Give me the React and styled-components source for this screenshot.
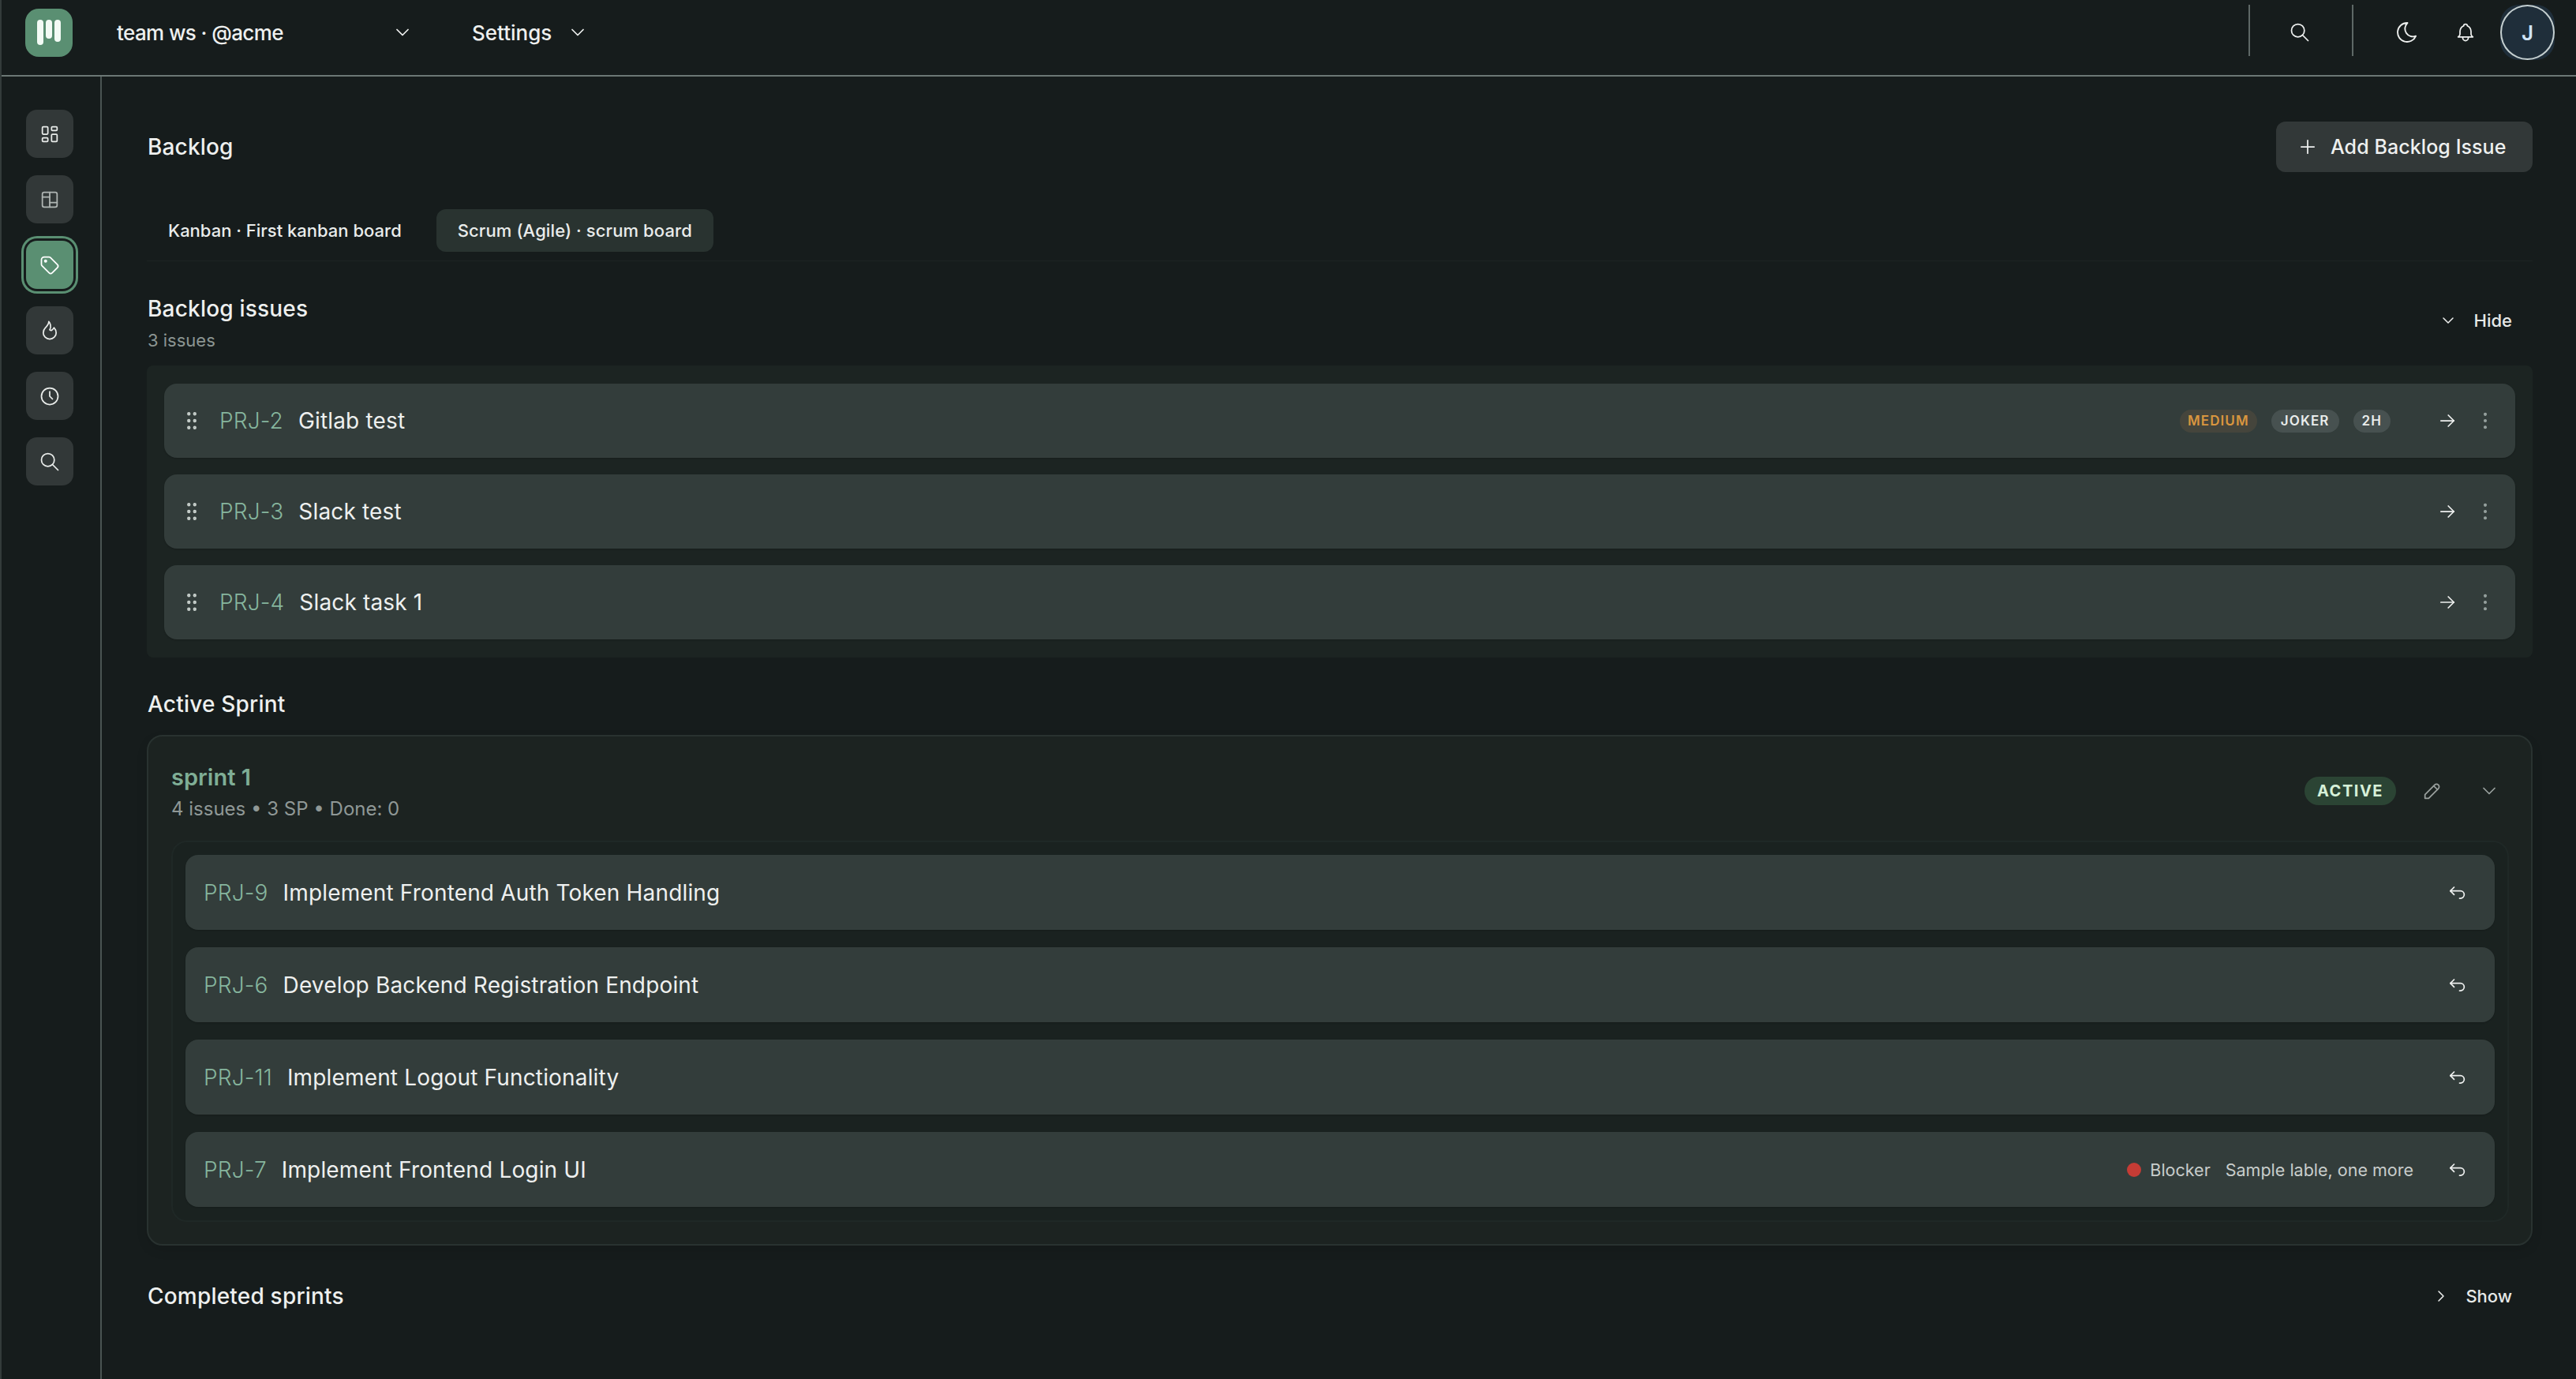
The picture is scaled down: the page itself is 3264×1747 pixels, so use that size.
import React from "react";
import styled, { createGlobalStyle } from "styled-components";
import {
  TbLayoutDashboard, TbLayoutBoard, TbTag, TbFlame, TbClock, TbSearch, TbMoon, TbBell,
  TbChevronDown, TbChevronRight, TbArrowRight, TbDotsVertical, TbGripVertical, TbPencil,
  TbArrowBackUp, TbPlus,
} from "react-icons/tb";

const Global = createGlobalStyle`
  * { box-sizing: border-box; }
  html, body { margin: 0; padding: 0; background: #161c1c; }
  body { font-family: Inter, "Noto Sans", sans-serif; color: #e9eceb; -webkit-font-smoothing: antialiased; }
`;

const Page = styled.div`
  width: 3264px; height: 1747px; overflow: hidden;
  display: flex; flex-direction: column;
  background: #161c1c;
  border-left: 2px solid #333b3a;
`;

const Header = styled.header`
  height: 97px; flex: none;
  display: flex; align-items: center;
  padding: 0 27px 13px 30px;
  border-bottom: 2px solid #6c7775;
`;

const LogoBox = styled.div`
  width: 60px; height: 61px; border-radius: 17px; background: #5a8f72; flex: none;
  margin-right: 56px;
  display: flex; align-items: center; justify-content: center;
`;

const Workspace = styled.div`
  width: 376px; display: flex; align-items: center; justify-content: space-between;
  font-size: 26px; font-weight: 500; color: #eef0ef; letter-spacing: -0.6px;
`;

const Settings = styled.div`
  margin-left: 74px; display: flex; align-items: center; gap: 19px;
  font-size: 26px; font-weight: 500; color: #eef0ef;
`;

const IconSlot = styled.span`
  width: 28px; height: 28px; flex: none;
  display: inline-flex; align-items: center; justify-content: center;
  color: ${(p) => p.$color || "#eef0ef"};
  svg { display: block; flex: none; }
`;

const HeaderRight = styled.div`
  margin-left: auto; display: flex; align-items: center;
`;

const Sep = styled.div`
  width: 2px; height: 65px; background: #5e6866; flex: none;
  margin-left: ${(p) => p.$ml || 0}px;
  margin-top: -5px;
`;

const HeaderIcon = styled(IconSlot)`
  margin-left: ${(p) => p.$ml}px;
`;

const Avatar = styled.div`
  position: relative; width: 69px; height: 70px; margin-left: 30px; flex: none;
  border-radius: 24px; background: #1f2e3a; color: #cfe3f5;
  display: flex; align-items: center; justify-content: center;
  font-size: 26px; font-weight: 600;
  &::after {
    content: ""; position: absolute; inset: 0;
    border-radius: 50%; border: 2px solid #c4cfd0;
  }
`;

const Body = styled.div`
  flex: 1; display: flex; min-height: 0;
`;

const Sidebar = styled.nav`
  width: 127px; flex: none;
  border-right: 2px solid #4a5452;
  padding: 42px 0 0 31px;
  display: flex; flex-direction: column; gap: 22px;
`;

const SideButton = styled.div`
  width: 60px; height: 61px; border-radius: 14px;
  background: ${(p) => (p.$active ? "#5a8f72" : "#323838")};
  display: flex; align-items: center; justify-content: center;
  color: ${(p) => (p.$active ? "#ffffff" : p.$dim ? "#b0b6b4" : "#e9ecea")};
  box-shadow: ${(p) => (p.$active ? "0 0 0 3px #161c1c, 0 0 0 6px #5a8f72" : "none")};
`;

const Main = styled.main`
  flex: 1; min-width: 0; padding: 57px 55px 0 57px;
`;

const TitleRow = styled.div`
  height: 64px; display: flex; align-items: center; justify-content: space-between;
`;

const PageTitle = styled.h1`
  margin: 0; font-size: 28px; line-height: 40px; font-weight: 500; color: #eef0ef;
  letter-spacing: 0.15px; padding-left: 1px;
`;

const AddButton = styled.button`
  height: 64px; width: 325px; padding: 0 0 0 26px; border: 0; border-radius: 12px;
  background: #323838; color: #eef0ef;
  display: flex; align-items: center; gap: 15px;
  font-family: inherit; font-size: 25px; font-weight: 500; letter-spacing: 0.08px;
`;

const Tabs = styled.div`
  margin-top: 47px; padding-bottom: 11px;
  display: flex; gap: 17px;
  border-bottom: 1px solid #1d2423;
`;

const Tab = styled.div`
  height: 54px; padding: 0 27px; border-radius: 12px;
  display: flex; align-items: center;
  font-size: 22px; font-weight: 500; color: #e9eceb;
  letter-spacing: ${(p) => (p.$active ? "0.1px" : "0")};
  background: ${(p) => (p.$active ? "#293330" : "transparent")};
`;

const SectionHead = styled.div`
  margin-top: 40px; display: flex; align-items: center; justify-content: space-between;
  margin-bottom: 16px;
`;

const SectionTitle = styled.h2`
  margin: 0; font-size: 28px; line-height: 40px; font-weight: 500; color: #eef0ef;
  letter-spacing: 0.2px; padding-left: 1px;
`;

const SectionMeta = styled.div`
  margin-top: 4px; padding-left: 1px; font-size: 22px; line-height: 32px; color: #8b9592;
`;

const Toggle = styled.div`
  display: flex; align-items: center; gap: ${(p) => p.$gap}px;
  margin-right: 26px; margin-bottom: ${(p) => p.$mb || 0}px;
  font-size: 22px; font-weight: 500; color: #e6e9e8;
`;

const BacklogPanel = styled.section`
  height: 370px; padding: 23px 22px;
  background: #1c2422; border-radius: 8px;
  display: flex; flex-direction: column; gap: 21px;
`;

const Row = styled.div`
  height: ${(p) => (p.$tall ? 95 : 94)}px;
  flex: none; border-radius: 16px; background: #333d3b;
  display: flex; align-items: center;
  padding: ${(p) => (p.$tall ? "0 34px 0 23px" : "0 24px 0 21px")};
  box-shadow: 0 1px 2px rgba(0, 0, 0, 0.18);
`;

const Key = styled.span`
  margin-left: ${(p) => p.$ml || 0}px;
  font-size: 28px; font-weight: 350; color: #86b69e; white-space: nowrap; letter-spacing: 0.16px;
`;

const IssueTitle = styled.span`
  margin-left: 19px; font-size: 28px; font-weight: 400; color: #eef0ef; white-space: nowrap;
  letter-spacing: 0.16px;
`;

const RowEnd = styled.div`
  margin-left: auto; display: flex; align-items: center;
`;

const Badge = styled.span`
  height: 29px; padding: 0 ${(p) => p.$px || 12}px; margin-right: 18px; border-radius: 15px;
  display: flex; align-items: center;
  font-size: 17px; font-weight: 600; letter-spacing: 1.1px;
  color: ${(p) => p.$color || "#e9eceb"};
  background: ${(p) => p.$bg || "#475150"};
`;

const ArrowSlot = styled(IconSlot)`
  margin-left: 40px;
`;

const MenuSlot = styled(IconSlot)`
  margin-left: 20px;
`;

const SprintTitle = styled(SectionTitle)`
  margin-top: 39px; margin-bottom: 19px;
`;

const SprintCard = styled.section`
  height: 647px; padding: 0 28px 0 29px;
  background: #1c2321;
  border: 2px solid #293230; border-radius: 20px;
  box-shadow: 0 6px 14px rgba(0, 0, 0, 0.1);
`;

const SprintHead = styled.div`
  height: 132px; padding-top: 32px; display: flex; justify-content: space-between;
`;

const SprintName = styled.div`
  font-size: 29px; line-height: 40px; font-weight: 600; color: #7fae96;
`;

const SprintMeta = styled.div`
  font-size: 24px; line-height: 40px; font-weight: 400; color: #8f9896;
`;

const SprintControls = styled.div`
  height: 36px; margin-top: 19px; margin-right: 11px;
  display: flex; align-items: center; gap: 44px;
`;

const ActiveBadge = styled.span`
  width: 116px; height: 36px; border-radius: 18px; margin-right: -12px;
  display: flex; align-items: center; justify-content: center;
  background: #2b4434; color: #d6f0d8;
  font-size: 20px; font-weight: 700; letter-spacing: 1.5px;
`;

const SprintList = styled.div`
  height: 483px; padding: 16px 16px;
  background: #1a2220;
  border: 2px solid #1f2826; border-radius: 20px;
  display: flex; flex-direction: column; gap: 22px;
`;

const Dot = styled.span`
  width: 18px; height: 18px; border-radius: 50%; background: #c53c35; flex: none; margin-right: 11px;
`;

const LabelText = styled.span`
  font-size: 21.5px; color: #c8cdcb; margin-right: ${(p) => p.$mr}px; white-space: nowrap;
`;

const CompletedRow = styled.div`
  margin-top: 44px; display: flex; align-items: center; justify-content: space-between;
`;

const Logo = () => (
  <svg width="60" height="61" viewBox="0 0 60 61">
    <rect x="15" y="14" width="8" height="32" rx="4" fill="#f3fbf5" />
    <rect x="26" y="14" width="8" height="24" rx="4" fill="#f3fbf5" />
    <rect x="37" y="14" width="8" height="28" rx="4" fill="#f3fbf5" />
  </svg>
);

const icon = (I, size = 28, sw = 1.5) => <I size={size} strokeWidth={sw} />;

const backlog = [
  { key: "PRJ-2", title: "Gitlab test", badges: true },
  { key: "PRJ-3", title: "Slack test" },
  { key: "PRJ-4", title: "Slack task 1" },
];

const sprint = [
  { key: "PRJ-9", title: "Implement Frontend Auth Token Handling" },
  { key: "PRJ-6", title: "Develop Backend Registration Endpoint" },
  { key: "PRJ-11", title: "Implement Logout Functionality" },
  { key: "PRJ-7", title: "Implement Frontend Login UI", labels: true },
];

const sideIcons = [TbLayoutDashboard, TbLayoutBoard, TbTag, TbFlame, TbClock, TbSearch];

export default function App() {
  return (
    <Page>
      <Global />
      <Header>
        <LogoBox><Logo /></LogoBox>
        <Workspace>
          <span>team ws · @acme</span>
          <IconSlot>{icon(TbChevronDown)}</IconSlot>
        </Workspace>
        <Settings>
          <span>Settings</span>
          <IconSlot>{icon(TbChevronDown)}</IconSlot>
        </Settings>
        <HeaderRight>
          <Sep />
          <HeaderIcon $ml={49}>{icon(TbSearch)}</HeaderIcon>
          <Sep $ml={52} />
          <HeaderIcon $ml={54}>{icon(TbMoon, 32, 1.4)}</HeaderIcon>
          <HeaderIcon $ml={46}>{icon(TbBell)}</HeaderIcon>
          <Avatar>J</Avatar>
        </HeaderRight>
      </Header>
      <Body>
        <Sidebar>
          {sideIcons.map((I, i) => (
            <SideButton key={i} $active={i === 2} $dim={i === 1}>{icon(I)}</SideButton>
          ))}
        </Sidebar>
        <Main>
          <TitleRow>
            <PageTitle>Backlog</PageTitle>
            <AddButton>
              <IconSlot>{icon(TbPlus)}</IconSlot>
              Add Backlog Issue
            </AddButton>
          </TitleRow>
          <Tabs>
            <Tab>Kanban · First kanban board</Tab>
            <Tab $active>Scrum (Agile) · scrum board</Tab>
          </Tabs>
          <SectionHead>
            <div>
              <SectionTitle>Backlog issues</SectionTitle>
              <SectionMeta>3 issues</SectionMeta>
            </div>
            <Toggle $gap={19} $mb={6}>
              <IconSlot>{icon(TbChevronDown, 24)}</IconSlot>
              Hide
            </Toggle>
          </SectionHead>
          <BacklogPanel>
            {backlog.map((r) => (
              <Row key={r.key}>
                <IconSlot $color="#c8d0cc">{icon(TbGripVertical, 30)}</IconSlot>
                <Key $ml={21}>{r.key}</Key>
                <IssueTitle>{r.title}</IssueTitle>
                <RowEnd>
                  {r.badges && (
                    <>
                      <Badge $color="#d9963f" $bg="#45453c" $px={10}>MEDIUM</Badge>
                      <Badge>JOKER</Badge>
                      <Badge $px={11}>2H</Badge>
                    </>
                  )}
                  <ArrowSlot>{icon(TbArrowRight)}</ArrowSlot>
                  <MenuSlot $color="#9aa5a2">{icon(TbDotsVertical)}</MenuSlot>
                </RowEnd>
              </Row>
            ))}
          </BacklogPanel>
          <SprintTitle>Active Sprint</SprintTitle>
          <SprintCard>
            <SprintHead>
              <div>
                <SprintName>sprint 1</SprintName>
                <SprintMeta>4 issues • 3 SP • Done: 0</SprintMeta>
              </div>
              <SprintControls>
                <ActiveBadge>ACTIVE</ActiveBadge>
                <IconSlot $color="#9aa09e">{icon(TbPencil)}</IconSlot>
                <IconSlot $color="#9aa09e">{icon(TbChevronDown)}</IconSlot>
              </SprintControls>
            </SprintHead>
            <SprintList>
              {sprint.map((r) => (
                <Row key={r.key} $tall>
                  <Key>{r.key}</Key>
                  <IssueTitle>{r.title}</IssueTitle>
                  <RowEnd>
                    {r.labels && (
                      <>
                        <Dot />
                        <LabelText $mr={19}>Blocker</LabelText>
                        <LabelText $mr={41}>Sample lable, one more</LabelText>
                      </>
                    )}
                    <IconSlot>{icon(TbArrowBackUp)}</IconSlot>
                  </RowEnd>
                </Row>
              ))}
            </SprintList>
          </SprintCard>
          <CompletedRow>
            <SectionTitle>Completed sprints</SectionTitle>
            <Toggle $gap={17}>
              <IconSlot>{icon(TbChevronRight, 24)}</IconSlot>
              Show
            </Toggle>
          </CompletedRow>
        </Main>
      </Body>
    </Page>
  );
}
